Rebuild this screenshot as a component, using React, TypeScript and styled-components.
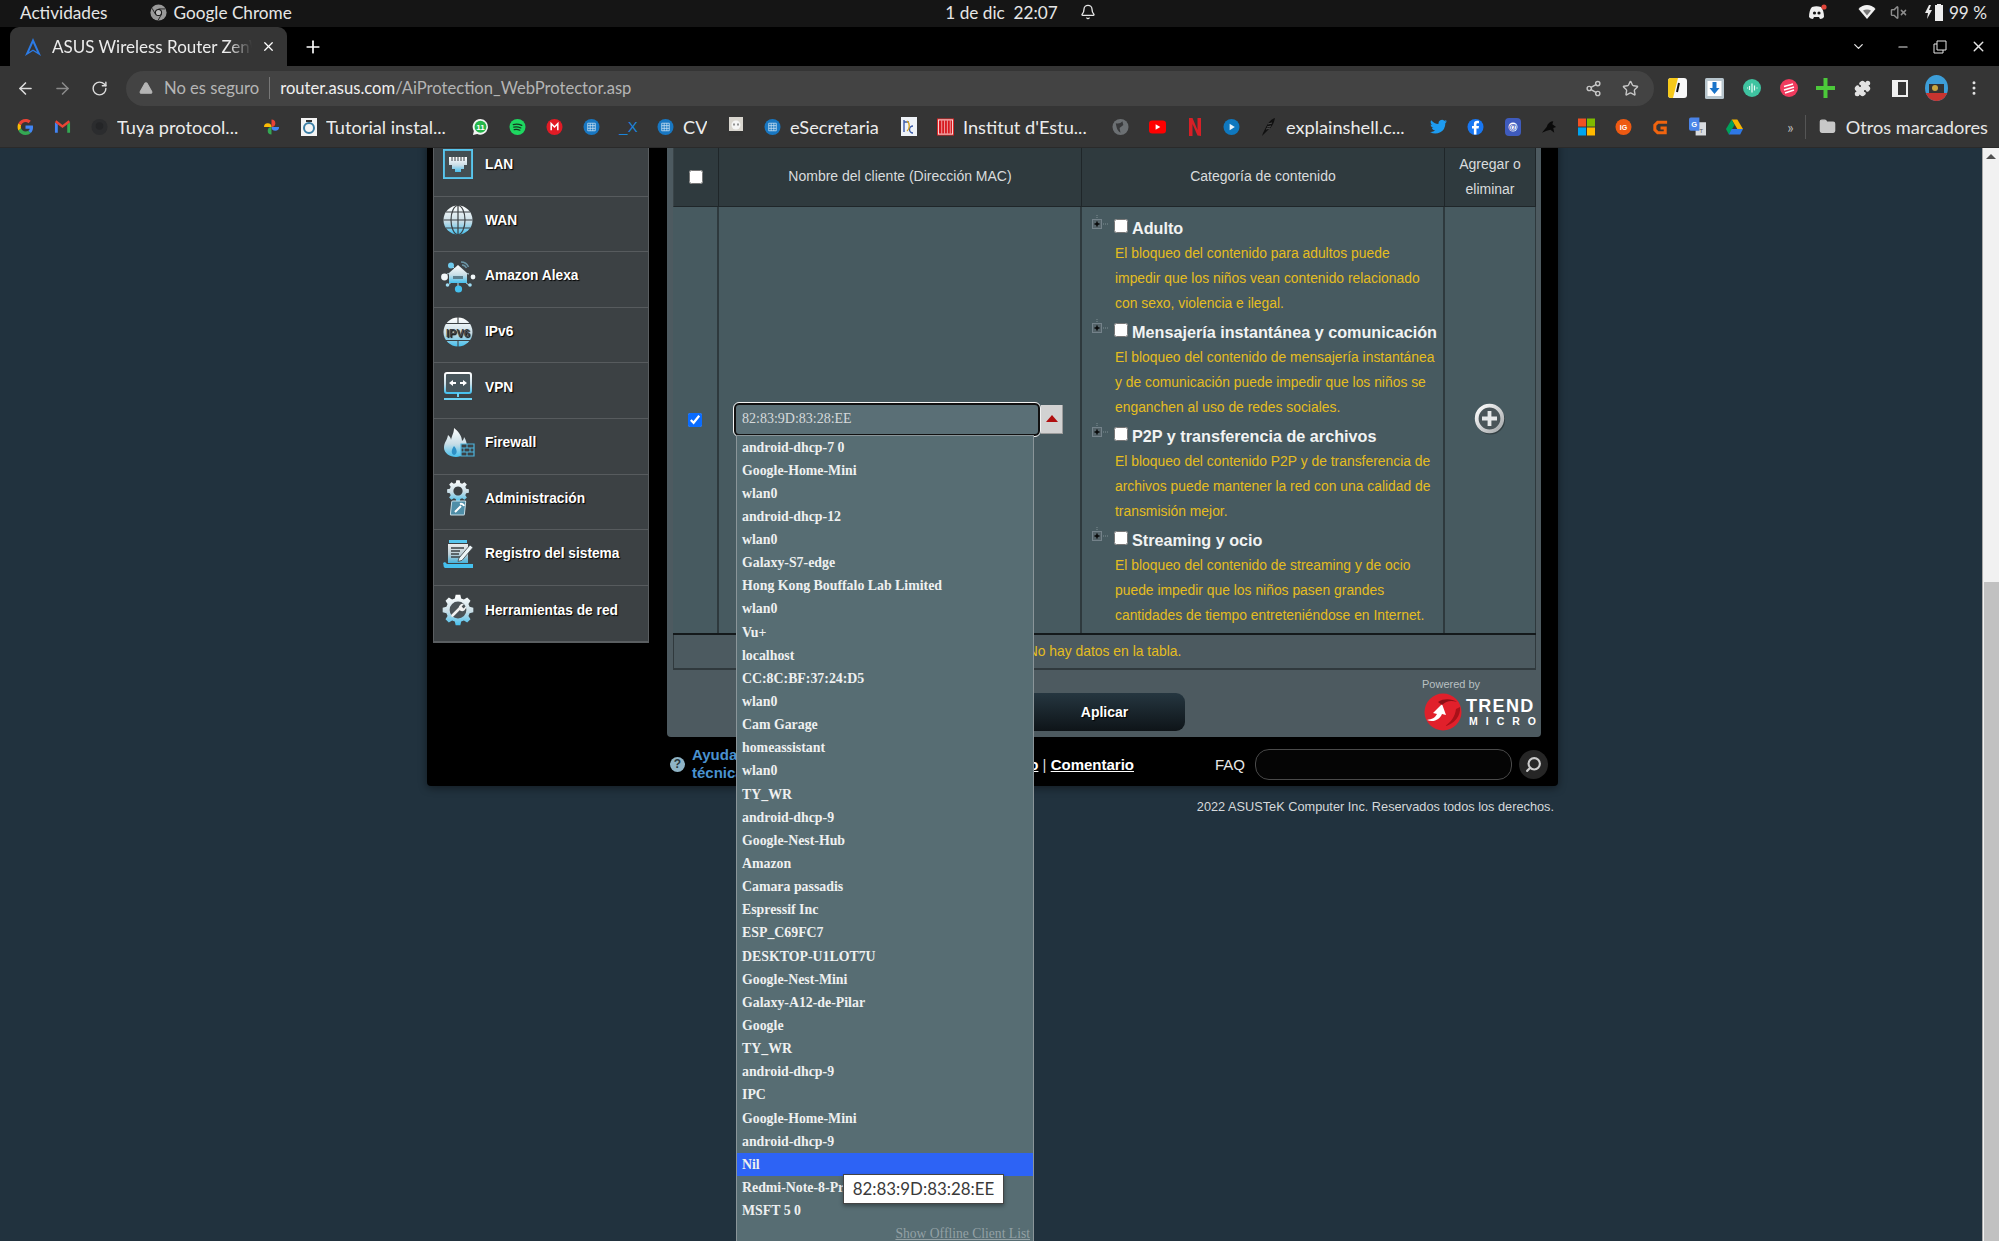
import React, { useId } from "react";
import styled, { createGlobalStyle } from "styled-components";
import {
  ArrowLeft, ArrowRight, RotateCw, TriangleAlert, Star, Share2, Puzzle, Plus, X, ChevronDown, Minus, Search,
  Bell, VolumeX, Folder, EllipsisVertical,
} from "lucide-react";

const Global = createGlobalStyle`
  html, body { margin: 0; padding: 0; width: 1999px; height: 1241px; overflow: hidden; background: #21323e; }
  * { box-sizing: border-box; }
`;

const UI = `"Lato", "Open Sans", sans-serif`;
const ARIAL = `"Liberation Sans", Arial, sans-serif`;
const TIMES = `"Liberation Serif", "Times New Roman", serif`;

const Screen = styled.div`
  width: 1999px; height: 1241px; display: flex; flex-direction: column; overflow: hidden;
  font-family: ${UI};
`;

/* ---------- system bar ---------- */
const SystemBar = styled.div`
  height: 27px; background: #151515; color: #e6e6e6; font-size: 17.2px;
  display: grid; grid-template-columns: 1fr auto 1fr; align-items: center; padding: 0 12px 3px 20px;
`;
const SysLeft = styled.div`display: flex; align-items: center;`;
const SysApp = styled.div`display: flex; align-items: center; gap: 7px; margin-left: 42px;`;
const SysCenter = styled.div`display: flex; align-items: center; gap: 22px; margin-left: 34px;`;
const SysRight = styled.div`display: flex; align-items: center; justify-content: flex-end;`;
const SysIcon = styled.span<{ $mr: number }>`display: flex; margin-right: ${(p) => p.$mr}px;`;

/* ---------- tab strip ---------- */
const TabStrip = styled.div`
  height: 39px; background: #000; display: flex; align-items: stretch; padding-left: 10px; color: #fff;
`;
const Tab = styled.div`
  width: 277px; background: #353535; border-radius: 9px 9px 0 0; display: flex; align-items: center;
  padding: 0 11px 0 13px; gap: 9px; font-size: 17px;
`;
const TabTitle = styled.span`
  flex: 1; overflow: hidden; white-space: nowrap; color: #ececec;
  -webkit-mask-image: linear-gradient(90deg, #000 88%, transparent);
  mask-image: linear-gradient(90deg, #000 88%, transparent);
`;
const NewTab = styled.div`display: flex; align-items: center; margin-left: 16px;`;
const WindowControls = styled.div`
  margin-left: auto; display: flex; align-items: center; color: #e6e6e6;
`;
const WindowBtn = styled.span<{ $w: number }>`
  width: ${(p) => p.$w}px; display: flex; justify-content: center;
`;

/* ---------- toolbar ---------- */
const Toolbar = styled.div`
  height: 44px; background: #353535; display: flex; align-items: center; padding: 0 7px 0 7px;
`;
const NavBtn = styled.span<{ $dim?: boolean }>`
  width: 37px; display: flex; justify-content: center; color: ${(p) => (p.$dim ? "#8a8a8a" : "#dcdcdc")};
`;
const Omnibox = styled.div`
  width: 1528px; height: 35px; margin-left: 8px; background: #434343; border-radius: 18px; display: flex; align-items: center;
  padding: 0 15px 0 13px; font-size: 16.6px; color: #b5b5b5;
`;
const Security = styled.span`display: flex; align-items: center; gap: 11px; padding-right: 10px; border-right: 1px solid #777; height: 22px;`;
const Url = styled.span`margin-left: 10px; color: #b5b5b5; b { font-weight: 400; color: #f0f0f0; }`;
const OmniActions = styled.span`margin-left: auto; display: flex; gap: 20px; color: #c6c6c6;`;
const Extensions = styled.div`display: flex; margin-left: 5px;`;
const ExtBtn = styled.span`width: 37px; height: 26px; display: flex; justify-content: center; align-items: center; color: #e2e2e2;`;

/* ---------- bookmarks ---------- */
const Bookmarks = styled.div`
  height: 38px; background: #353535; display: flex; align-items: center; padding: 0 0 4px 7px;
  border-bottom: 1px solid #2a2a2a; color: #ececec; font-size: 18.2px;
`;
const Bookmark = styled.div`
  display: flex; align-items: center; gap: 9px; padding: 0 10px; flex: none;
`;
const BmGlyph = styled.span`width: 17px; height: 18px; display: flex; align-items: center; justify-content: center; flex: none;`;
const BmLabel = styled.span<{ $w: number }>`width: ${(p) => p.$w}px; white-space: nowrap; overflow: hidden;`;
const BmTextIcon = styled.span`color: #1c84d8; font-family: ${ARIAL}; font-size: 15px; white-space: nowrap;`;
const BmRight = styled.div`
  margin-left: auto; display: flex; align-items: center; padding-right: 11px;
`;
const Chevrons = styled.span`color: #bbb; font-size: 15px; padding-right: 11px; border-right: 1px solid #555; height: 24px; display: flex; align-items: center;`;
const OtherMarks = styled.span`display: flex; align-items: center; gap: 10px; margin-left: 13px; color: #e6e6e6; svg { color: #c8c8c8; }`;

/* ---------- page ---------- */
const Browser = styled.div`flex: 1; min-height: 0; display: flex;`;
const Viewport = styled.div`
  flex: 1; min-width: 0; background: #21323e; overflow: hidden;
`;
const Scrollbar = styled.div`
  width: 17px; background: #f1f1f1; border-left: 1px solid #a9a9a9; display: flex; flex-direction: column; align-items: center;
`;
const ScrollUp = styled.div`
  width: 0; height: 0; margin-top: 6px; border-left: 5px solid transparent; border-right: 5px solid transparent;
  border-bottom: 5px solid #505050;
`;
const ScrollThumb = styled.div`width: 15px; flex: 1; margin-top: 423px; background: #c1c1c1;`;

const Frame = styled.div`
  width: 1131px; margin: -8px 0 0 427px; background: #000; border-radius: 0 0 4px 4px;
  box-shadow: 0 2px 8px rgba(0,0,0,.45);
`;
const FrameBody = styled.div`display: flex; padding: 1px 0 0 6px; align-items: flex-start;`;
const Sidebar = styled.nav`
  width: 216px; background: #3c4144; border: solid #5a5e61; border-width: 0 1px 2px 1px;
`;
const MenuRow = styled.div`
  height: 55.6px; display: flex; align-items: center; gap: 9px; padding: 0 0 7px 6px;
  border-bottom: 1.5px solid #575b5e;
  color: #fff; font: bold 13.75px ${ARIAL}; text-shadow: 1px 1px 1px #000;
  &:last-child { border-bottom: 0; }
`;
const MenuGlyph = styled.span`width: 36px; height: 36px; display: flex; align-items: center; justify-content: center; flex: none;`;

const Panel = styled.section`
  width: 874px; height: 596px; margin-left: 18px; margin-top: 0; padding: 6px 5px 0 6px;
  background: #4d5a60; border-radius: 0 0 4px 4px; display: flex; flex-direction: column;
`;
const Table = styled.div`
  display: grid; grid-template-columns: 46px 363px 363px 91px; grid-template-rows: 60px 426px 2px 35px;
  font-family: ${ARIAL};
`;
const HeadCell = styled.div`
  background: #2f3a3e; color: #d9dcdd; font-size: 14px; line-height: 25px; text-align: center;
  display: flex; align-items: center; justify-content: center;
  border-right: 1px solid #1f2629; border-bottom: 1px solid #1f2629;
  &:first-child { border-left: 1px solid #3a4448; }
  &:last-child { border-right: 1px solid #5a6468; }
`;
const BodyCell = styled.div<{ $left?: boolean }>`
  position: relative; background: #475a60; display: flex; align-items: center; justify-content: center;
  border-right: 2px solid #2e393d;
`;
const ClientCell = styled(BodyCell)`justify-content: flex-start; padding-left: 15px; z-index: 3;`;
const Rule = styled.div`grid-column: 1 / -1; background: #14191b;`;
const EmptyRow = styled.div`
  grid-column: 1 / -1; background: #4c5a60; border: solid #30393d; border-width: 0 1px 2px 1px;
  color: #e5bd1f; font-size: 13.9px; display: flex; align-items: center; justify-content: center; padding-bottom: 1px;
`;
const Check = styled.input`
  width: 14px; height: 14px; margin: 0; flex: none; accent-color: #0a6cff;
`;

const CatCell = styled(BodyCell)`
  flex-direction: column; align-items: stretch; justify-content: flex-start; padding: 7px 0 0 15px;
`;
const Category = styled.div`position: relative; height: 104px; padding-left: 18px;`;
const Expander = styled.span`position: absolute; left: -7px; top: 1px; display: flex;`;
const CatHead = styled.label`
  display: flex; align-items: flex-start; gap: 4px; height: 27px; margin-left: -1px;
  color: #f1f3f3; font: bold 16.2px/29px ${ARIAL}; white-space: nowrap;
  input { margin-top: 5px; }
`;
const CatText = styled.p`
  margin: 0; width: 320px; color: #e5bd1f; font-size: 13.88px; line-height: 25px; white-space: nowrap;
`;

const AddCell = styled(BodyCell)`border-right: 1px solid #2e393d; padding: 0 1px 2px 0;`;

/* combo */
const Combo = styled.div`display: flex; align-items: center; width: 330px; position: relative; margin-bottom: 2px;`;
const ComboInput = styled.div`
  width: 306px; height: 33px; background: #5a6f76; border: 2px solid #111; border-radius: 5px;
  outline: 1.5px solid #f2f2f2; color: #d6dadb; font: 14px/28px ${TIMES}; padding-left: 6px;
`;
const ComboArrow = styled.div`
  width: 22px; height: 29px; margin-left: 1px; background: #d2d2d2; display: flex; align-items: center; justify-content: center;
  border-right: 1px solid #9b9b9b; border-bottom: 1px solid #9b9b9b;
  i { width: 0; height: 0; border-left: 6px solid transparent; border-right: 6px solid transparent; border-bottom: 7px solid #b00f10; }
`;
const ClientList = styled.ul`
  position: absolute; left: 2px; top: 32px; width: 298px; margin: 0; padding: 0; list-style: none;
  background: #576d73; border: solid #8a9599; border-width: 1px 1px 0 1px;
  font: bold 13.85px ${TIMES}; color: #eef0f0; z-index: 5;
`;
const ClientItem = styled.li<{ $active?: boolean }>`
  height: 23.15px; line-height: 23.15px; padding-left: 5px; white-space: nowrap;
  background: ${(p) => (p.$active ? "#2d63f5" : "transparent")};
`;
const OfflineLink = styled.li`
  height: 23.15px; line-height: 23.15px; text-align: right; padding-right: 3px;
  color: #93a1a5; font: 13.6px/23.15px ${TIMES}; text-decoration: underline;
`;
const Tooltip = styled.div`
  position: absolute; left: 106px; top: 738px; width: 161px; height: 30px; background: #fff; color: #3a3a3a;
  border: 1px solid #444; font: 16.9px/27px ${UI}; text-align: center; box-shadow: 0 2px 4px rgba(0,0,0,.35); z-index: 6;
`;

/* actions */
const ActionRow = styled.div`
  height: 68px; display: grid; grid-template-columns: 1fr 160px 1fr; align-items: end; padding-bottom: 6px; font-family: ${ARIAL};
`;
const Apply = styled.button`
  grid-column: 2; height: 38px; border: 0; border-radius: 9px; color: #fff; font: bold 14px ${ARIAL};
  background: linear-gradient(180deg, #253640 0%, #0e1418 100%); text-shadow: 1px 1px 1px #000; padding: 0;
`;
const Powered = styled.div`justify-self: end; width: 114px; display: flex; flex-direction: column; align-items: flex-start;`;
const PoweredBy = styled.span`color: #b9c0c2; font-size: 11px; margin-bottom: 3px;`;
const TrendRow = styled.div`display: flex; align-items: center; gap: 4px; padding-left: 2px;`;
const TrendText = styled.div`display: flex; flex-direction: column; color: #fff; font-weight: bold; line-height: 1;`;
const TrendTop = styled.span`font-size: 18px; letter-spacing: 1.3px;`;
const TrendBottom = styled.span`font-size: 10.5px; letter-spacing: 8px; margin-top: 1px; margin-left: 3px; white-space: nowrap;`;

/* footer */
const Footer = styled.footer`
  height: 49px; display: flex; align-items: center; padding: 5px 0 0 243px; font-family: ${ARIAL}; color: #fff;
`;
const HelpBadge = styled.span`
  width: 15px; height: 15px; border-radius: 50%; background: #8fb4c6; color: #26363d; font: bold 12px/15px ${ARIAL}; text-align: center; flex: none;
`;
const HelpLabel = styled.span`margin-left: 7px; color: #4a92cf; font: bold 15px/18px ${ARIAL}; width: 90px; flex: none;`;
const FooterLinks = styled.span`
  width: 352px; flex: none; text-align: right; font-size: 15px; color: #ddd; white-space: nowrap;
  a { color: #fff; font-weight: bold; text-decoration: underline; }
`;
const Faq = styled.span`margin-left: 81px; width: 30px; flex: none; font-size: 15px; color: #e8e8e8;`;
const FaqInput = styled.div`
  width: 257px; height: 31px; flex: none; margin-left: 10px; border: 1px solid #4a4a4a; border-radius: 14px; background: #050505;
`;
const FaqSearch = styled.span`
  width: 29px; height: 29px; flex: none; margin-left: 7px; border-radius: 50%; background: #262626; display: flex; align-items: center; justify-content: center; color: #ccc;
  svg { transform: scaleX(-1); }
`;
const Copyright = styled.div`
  width: 1131px; margin-left: 427px; padding: 13px 4px 0 0; text-align: right; color: #d5d9db; font: 12.75px ${ARIAL};
`;

/* ---------- drawings ---------- */
const gearPath = (cx: number, cy: number, ro: number, ri: number, teeth: number) => {
  const pts: string[] = [];
  for (let i = 0; i < teeth; i++) {
    const a = (i / teeth) * Math.PI * 2;
    const w = (Math.PI / teeth) * 0.55;
    const coords = [[a - w * 1.25, ri], [a - w * 0.7, ro], [a + w * 0.7, ro], [a + w * 1.25, ri]];
    coords.forEach(([t, r]) => pts.push(`${(cx + r * Math.cos(t)).toFixed(2)} ${(cy + r * Math.sin(t)).toFixed(2)}`));
  }
  return `M${pts.join("L")}Z`;
};

const MenuSvg: React.FC<{ children: (g: string) => React.ReactNode }> = ({ children }) => {
  const id = useId().replace(/[^a-z0-9]/gi, "");
  return (
    <svg width="36" height="36" viewBox="0 0 36 36">
      <defs>
        <linearGradient id={id} x1="0" y1="0" x2="0" y2="1">
          <stop offset="0" stopColor="#ffffff" />
          <stop offset="0.55" stopColor="#c8dde6" />
          <stop offset="1" stopColor="#45c0ee" />
        </linearGradient>
      </defs>
      {children(`url(#${id})`)}
    </svg>
  );
};
const BG = "#3c4144";

const LanIcon = () => (
  <MenuSvg>{(g) => <>
    <rect x="4" y="3" width="28" height="28" fill="none" stroke="#58c6ee" strokeWidth="2" />
    <rect x="4.8" y="3.8" width="26.4" height="26.4" fill="#48565c" opacity=".6" />
    <path d="M9 10h18v8h-3v4h-3v3h-6v-3h-3v-4H9z" fill={g} />
    <path d="M12 10v4M15 10v4M18 10v4M21 10v4M24 10v4" stroke={BG} strokeWidth="1" />
  </>}</MenuSvg>
);
const GlobeLines = () => <>
  <ellipse cx="18" cy="18" rx="7" ry="14.5" fill="none" stroke={BG} strokeWidth="1.2" />
  <path d="M18 3v30M3.5 18h29M6 10h24M6 26h24" stroke={BG} strokeWidth="1.2" />
</>;
const WanIcon = () => (
  <MenuSvg>{(g) => <><circle cx="18" cy="18" r="14.5" fill={g} /><GlobeLines /></>}</MenuSvg>
);
const AlexaIcon = () => (
  <MenuSvg>{(g) => <>
    <path d="M7 16L18 14M29 16L18 14M8 27L14 22M29 27L22 22M18 24v6M11 7l5 5" stroke="#bcd6e0" strokeWidth="1" />
    <path d="M18 7l9 8v10H9V15z" fill={g} />
    <rect x="13" y="18" width="10" height="3" fill="#5d7f8e" />
    <circle cx="4.5" cy="19" r="3.4" fill="#f2f7f9" /><circle cx="33" cy="19" r="2.4" fill="#f2f7f9" />
    <circle cx="11" cy="7.5" r="3" fill="#6fcbee" /><circle cx="18.5" cy="31" r="3.6" fill="#45c0ee" />
    <circle cx="7.5" cy="27" r="1.8" fill="#9fdcf3" /><circle cx="30" cy="27" r="1.8" fill="#9fdcf3" />
    <path d="M21 4c3 0 6 1.5 7.5 5M22 7c2 0 3.5 1 4.5 3" fill="none" stroke="#6b94a5" strokeWidth="1.5" />
  </>}</MenuSvg>
);
const Ipv6Icon = () => (
  <MenuSvg>{(g) => <>
    <circle cx="18" cy="18" r="14.5" fill={g} />
    <path d="M18 3v7M18 26v7M6 9.5h24M6 26.5h24" stroke={BG} strokeWidth="1.1" />
    <text x="18" y="22.5" textAnchor="middle" fontFamily={ARIAL} fontSize="11" fontWeight="bold" fill={BG}>IPV6</text>
  </>}</MenuSvg>
);
const VpnIcon = () => (
  <MenuSvg>{(g) => <>
    <rect x="5" y="4" width="26" height="20" rx="2" fill="#48565c" stroke={g} strokeWidth="2" />
    <path d="M9 14l4-3v2h3v2h-3v2zM27 14l-4-3v2h-3v2h3v2z" fill="#fff" />
    <path d="M17 24h2v4h-2zM4 29h28v2H4z" fill="#6cd0f2" />
  </>}</MenuSvg>
);
const FireIcon = () => (
  <MenuSvg>{(g) => <>
    <path d="M4 23c0-6 3-7 4-13 2 2 3 3 3 5 1-5 3-7 3-12 4 3 8 8 8 13 1-1 2-2 2-4 2 3 3 6 3 11 0 5-5 9-11 9S4 28 4 23z" fill={g} />
    <path d="M14 30c-3-1-3-5 0-9 3 3 4 8 0 9z" fill="#2e90c6" />
    <path d="M21 19h13v12H21z" fill="#3c4144" stroke="#4db4dc" strokeWidth="1.2" />
    <path d="M21 23h13M21 27h13M27 19v4M24 23v4M30 23v4M27 27v4" stroke="#4db4dc" strokeWidth="1" />
  </>}</MenuSvg>
);
const AdminIcon = () => (
  <MenuSvg>{(g) => <>
    <path fillRule="evenodd" d={`${gearPath(18, 11, 11, 8.4, 8)}M18 6.4a4.6 4.6 0 1 0 .01 0z`} fill={g} />
    <rect x="11" y="21" width="14" height="14" rx="1" transform="skewX(-6) translate(3 0)" fill="#4f8ea8" stroke="#c8dde6" />
    <path d="M15 32l6-6m-1-2a3 3 0 0 1 4 2" stroke="#fff" strokeWidth="2" fill="none" />
  </>}</MenuSvg>
);
const LogIcon = () => (
  <MenuSvg>{(g) => <>
    <path d="M9 4h18v3H9z" fill="#58c6ee" />
    <rect x="8" y="8" width="20" height="19" fill={g} opacity=".9" />
    <path d="M11 12h13M11 15h9M11 18h8M11 21h10" stroke={BG} strokeWidth="1.4" />
    <path d="M19 22l11-13 3 2.4-11 13-4 1z" fill="#eef6f9" stroke={BG} strokeWidth=".8" />
    <path d="M3 27c1 2 0 4 2 5h28v-4H7l-2-2z" fill="#45c0ee" />
  </>}</MenuSvg>
);
const ToolsIcon = () => (
  <MenuSvg>{(g) => <>
    <path d={gearPath(18, 18, 15.5, 12, 8)} fill={g} />
    <circle cx="18" cy="18" r="8.4" fill="#4a5257" />
    <path d="M12.5 23.5l7.5-7.5" stroke="#f2f2f2" strokeWidth="2.6" strokeLinecap="round" />
    <path d="M19 17a4 4 0 0 1 5-5l-2.4 2.4 2 2L26 14a4 4 0 0 1-6 4.5z" fill="#f2f2f2" />
  </>}</MenuSvg>
);

const TrendLogo = () => (
  <svg width="38" height="38" viewBox="0 0 38 38">
    <circle cx="19" cy="19" r="18.5" fill="#e1202b" />
    <path d="M3 27c5-1 8-2 10-6l-4-1 9-9 4 11-4-1c-2 5-8 9-15 6z" fill="#fff" />
    <path d="M14 9c6-4 14-3 19 0-6-2-11-1-15 3z" fill="#8c0f16" />
    <path d="M36 14c1 8-5 17-15 19 6-4 10-9 11-17z" fill="#a81119" />
  </svg>
);
const AddIcon = () => (
  <svg width="32" height="32" viewBox="0 0 32 32">
    <defs>
      <linearGradient id="addRing" x1="0" y1="0" x2="1" y2="1">
        <stop offset="0" stopColor="#ffffff" /><stop offset="1" stopColor="#a4a8aa" />
      </linearGradient>
    </defs>
    <circle cx="16.5" cy="17" r="14.5" fill="#2a3336" opacity=".7" />
    <circle cx="15.5" cy="15.5" r="12.8" fill="#4a5559" stroke="url(#addRing)" strokeWidth="3.8" />
    <path d="M15.5 8v15M8 15.500h15" stroke="#e6e8e9" strokeWidth="3.8" />
  </svg>
);
const ExpanderIcon = () => (
  <svg width="20" height="20" viewBox="0 0 20 20">
    <path d="M7 0v4M13 9h6" stroke="#7f8d92" strokeDasharray="1 1" />
    <rect x="2.5" y="4.5" width="9" height="9" fill="#55646a" stroke="#74828a" />
    <path d="M4.5 9h5M7 6.5v5" stroke="#050505" strokeWidth="1.4" />
  </svg>
);

/* top chrome */
const ChromeLogo = ({ s = 17 }: { s?: number }) => (
  <svg width={s} height={s} viewBox="0 0 20 20">
    <circle cx="10" cy="10" r="9.5" fill="#9a9a9a" />
    <circle cx="10" cy="10" r="4.2" fill="#151515" /><circle cx="10" cy="10" r="3" fill="#bdbdbd" />
    <path d="M10 5.8h8M6.4 12l-4-7M13.6 12l-4 7" stroke="#151515" strokeWidth="1" />
  </svg>
);
const DiscordIcon = () => (
  <svg width="19" height="17" viewBox="0 0 19 17">
    <path d="M4 3c3-1 6-1 9 0 2 2 3 6 3 10-1 1-2 2-4 2l-1-2H6l-1 2c-2 0-3-1-4-2 0-4 1-8 3-10z" fill="#eee" />
    <circle cx="6.5" cy="9" r="1.6" fill="#151515" /><circle cx="11" cy="9" r="1.6" fill="#151515" />
    <circle cx="16" cy="3" r="2.6" fill="#e0453a" />
  </svg>
);
const WifiIcon = () => (
  <svg width="18" height="16" viewBox="0 0 18 16">
    <path d="M9 15L.5 5C5-.5 13-.5 17.5 5z" fill="#f0f0f0" />
    <path d="M9 11.5L5 6.5c2.4-1.4 5.6-1.4 8 0z" fill="#151515" opacity=".55" />
  </svg>
);
const BatteryIcon = () => (
  <svg width="22" height="19" viewBox="0 0 22 19">
    <path d="M5 2L1 10h3l-1 6 5-9H5l2-5z" fill="#e8e8e8" />
    <path d="M13 1h4v1h2v16h-8V2h2z" fill="#eee" />
  </svg>
);
const AsusFavicon = () => (
  <svg width="20" height="20" viewBox="0 0 20 20">
    <path d="M10 1L2 19l8-5 8 5z M10 6l4 9-4-2.6L6 15z" fill="#2c7be5" fillRule="evenodd" />
  </svg>
);
const Dot = ({ c, r = 8.5, children }: { c: string; r?: number; children?: React.ReactNode }) => (
  <svg width="18" height="18" viewBox="0 0 18 18">
    <circle cx="9" cy="9" r={r} fill={c} />
    {children}
  </svg>
);
const Upc = () => (
  <Dot c="#1877c2">
    <path d="M5 5h8v8H5zM5 7.6h8M5 10.4h8M7.6 5v8M10.4 5v8" fill="none" stroke="#cfe4f5" strokeWidth=".8" />
  </Dot>
);
const GoogleG = () => (
  <svg width="18" height="18" viewBox="0 0 18 18">
    <path d="M17 9.2c0-.6-.1-1.2-.2-1.7H9v3.3h4.5c-.2 1-.8 1.9-1.7 2.5l2.7 2.1c1.6-1.5 2.5-3.6 2.5-6.2z" fill="#4285f4" />
    <path d="M9 17.5c2.3 0 4.2-.8 5.5-2.1L11.8 13c-.7.5-1.7.8-2.8.8-2.2 0-4-1.5-4.7-3.5L1.5 12.6C2.9 15.5 5.7 17.5 9 17.5z" fill="#34a853" />
    <path d="M4.3 10.3c-.4-1-.4-2.1 0-3.1L1.5 5C.3 7.3.3 10.2 1.5 12.6z" fill="#fbbc05" />
    <path d="M9 3.7c1.2 0 2.3.4 3.2 1.2l2.4-2.4C13.2 1.200 11.2.5 9 .5 5.700.5 2.900 2.500 1.500 5l2.800 2.200C5 5.200 6.800 3.700 9 3.700z" fill="#ea4335" />
  </svg>
);
const Gmail = () => (
  <svg width="18" height="15" viewBox="0 0 18 15">
    <path d="M1 14V3l3 2v9z" fill="#4285f4" /><path d="M14 14V5l3-2v11z" fill="#34a853" />
    <path d="M1 3l8 6 8-6-1.500-2L9 6 2.500 1z" fill="#ea4335" />
  </svg>
);
const Pinwheel = () => (
  <svg width="18" height="18" viewBox="0 0 18 18">
    <path d="M9 9V1a4 4 0 0 1 0 8z" fill="#ea4335" /><path d="M9 9h8a4 4 0 0 1-8 0z" fill="#4285f4" />
    <path d="M9 9v8a4 4 0 0 1 0-8z" fill="#34a853" /><path d="M9 9H1a4 4 0 0 1 8 0z" fill="#fbbc05" />
  </svg>
);
const Tutorial = () => (
  <svg width="16" height="18" viewBox="0 0 16 18">
    <rect width="16" height="18" fill="#f4f4f4" /><circle cx="8" cy="10" r="5" fill="none" stroke="#3a7ea5" strokeWidth="2" />
    <path d="M5 2h6v2H5z" fill="#333" />
  </svg>
);
const Whatsapp = () => (
  <svg width="18" height="18" viewBox="0 0 18 18">
    <path d="M9 .5a8.300 8.300 0 0 0-7 12.700L1 17.500l4.500-1A8.300 8.300 0 1 0 9 .5z" fill="#f4f4f4" />
    <circle cx="9" cy="8.800" r="6.300" fill="#25b64a" />
    <text x="9" y="12" textAnchor="middle" fontSize="8.500" fill="#fff" fontFamily={ARIAL} fontWeight="bold">11</text>
  </svg>
);
const Spotify = () => (
  <Dot c="#1ed760">
    <path d="M4.500 6.500c3-.8 6-.6 9 .8M5 9.200c2.500-.6 5-.4 7.500.8M5.500 11.700c2-.4 4-.3 6 .7" stroke="#14361f" strokeWidth="1.300" fill="none" strokeLinecap="round" />
  </Dot>
);
const Mega = () => (
  <Dot c="#e11b25"><path d="M5.500 12.500v-7L9 9l3.500-3.500v7" stroke="#fff" strokeWidth="1.600" fill="none" /></Dot>
);
const Socket = () => (
  <svg width="14" height="19" viewBox="0 0 14 19">
    <rect width="14" height="19" fill="#d9d6cf" /><circle cx="7" cy="8" r="4.500" fill="#f5f5f5" />
    <path d="M5 6.500v2M9 6.500v2" stroke="#333" /><path d="M0 14h14v5H0z" fill="#333" />
  </svg>
);
const Dc = () => (
  <svg width="16" height="19" viewBox="0 0 16 19">
    <rect width="16" height="19" fill="#eef2f7" />
    <path d="M3 3v12M8 5l-5 0M12 9a3.500 3.500 0 1 0 0 7" stroke="#3a5aa8" strokeWidth="1.400" fill="none" />
    <path d="M6 4c3 2 3 8 0 10" stroke="#d9a21b" strokeWidth="1.300" fill="none" />
  </svg>
);
const Red = () => (
  <svg width="18" height="18" viewBox="0 0 18 18">
    <rect x=".5" y=".5" width="17" height="17" fill="#f8e9e9" stroke="#d22" />
    <path d="M2 2h14v14H2z" fill="#d71920" /><path d="M5 2v14M8 2v14M11 2v14M14 2v14" stroke="#f6c6c6" strokeWidth=".8" />
  </svg>
);
const YouTube = () => (
  <svg width="18" height="14" viewBox="0 0 18 14">
    <rect width="18" height="14" rx="3.500" fill="#f00" /><path d="M7 4l5 3-5 3z" fill="#fff" />
  </svg>
);
const Netflix = () => (
  <svg width="12" height="18" viewBox="0 0 12 18">
    <path d="M0 0h3.500l5 12V0H12v18l-3.500-.5L3.500 6v12L0 18z" fill="#d81f26" />
  </svg>
);
const Play = () => (
  <Dot c="#0f78bf"><path d="M7 5.500l5.500 3.500L7 12.500z" fill="#e8f4fb" /></Dot>
);
const Quill = () => (
  <svg width="16" height="18" viewBox="0 0 16 18">
    <path d="M14 0c-1 5-3 9-6 11L3 16l-2 2 1-3 3-6c2-4 5-8 9-9z" fill="#111" />
    <path d="M6 9l4-1M5 11l4-1M7 6l4-1" stroke="#666" strokeWidth=".7" />
  </svg>
);
const Twitter = () => (
  <svg width="18" height="15" viewBox="0 0 18 15">
    <path d="M18 2c-.7.300-1.400.500-2.100.600.800-.500 1.300-1.200 1.600-2-.7.400-1.500.700-2.300.900A3.700 3.700 0 0 0 9 4.800 10.500 10.500 0 0 1 1.300.900 3.700 3.700 0 0 0 2.400 5.800c-.6 0-1.200-.2-1.700-.5 0 1.800 1.300 3.300 3 3.700-.5.100-1.100.200-1.700.100.500 1.500 1.900 2.500 3.500 2.600A7.400 7.400 0 0 1 0 13.200 10.500 10.500 0 0 0 16.200 4c.7-.5 1.300-1.200 1.800-2z" fill="#1d9bf0" />
  </svg>
);
const Facebook = () => (
  <Dot c="#1877f2"><path d="M10 17v-6.500h2.300l.4-2.600H10V6.300c0-.8.300-1.300 1.400-1.300h1.300V2.700c-.6-.1-1.300-.2-2-.2-2 0-3.400 1.200-3.400 3.400v2H5.300v2.600h2v6.500z" fill="#fff" /></Dot>
);
const AtIcon = () => (
  <svg width="16" height="18" viewBox="0 0 16 18">
    <rect width="16" height="18" rx="4" fill="#3f5bbd" /><circle cx="8" cy="9" r="4.500" fill="#fff" />
    <text x="8" y="12" fontSize="9" textAnchor="middle" fill="#3f5bbd" fontFamily={ARIAL} fontWeight="bold">@</text>
  </svg>
);
const Bird = () => (
  <svg width="18" height="14" viewBox="0 0 18 14">
    <path d="M1 13l5-6c1-4 4-6 7-6l-1 3 4 3-3 1 1 5-4-3-4 1z" fill="#0a0a0a" />
  </svg>
);
const Windows = () => (
  <svg width="18" height="18" viewBox="0 0 18 18">
    <path d="M0 0h8.500v8.500H0z" fill="#f25022" /><path d="M9.500 0H18v8.500H9.500z" fill="#7fba00" />
    <path d="M0 9.500h8.500V18H0z" fill="#00a4ef" /><path d="M9.500 9.500H18V18H9.500z" fill="#ffb900" />
  </svg>
);
const IgBadge = () => (
  <Dot c="#ee5a12"><text x="9" y="12" fontSize="7.500" textAnchor="middle" fill="#fff" fontFamily={ARIAL} fontWeight="bold">IG</text></Dot>
);
const OrangeG = () => (
  <svg width="18" height="18" viewBox="0 0 18 18">
    <path d="M16 4H6L3 7v5l3 3h8v-5H9" fill="none" stroke="#f0640f" strokeWidth="3.200" />
  </svg>
);
const Translate = () => (
  <svg width="18" height="19" viewBox="0 0 18 19">
    <rect x="7" y="5" width="11" height="14" fill="#d9dce0" />
    <path d="M0 2a2 2 0 0 1 2-2h9v14H2a2 2 0 0 1-2-2z" fill="#4a83e8" />
    <text x="5.500" y="10" fontSize="8" textAnchor="middle" fill="#fff" fontFamily={ARIAL} fontWeight="bold">G</text>
    <text x="13" y="16" fontSize="6" textAnchor="middle" fill="#555" fontFamily={ARIAL}>T</text>
  </svg>
);
const Drive = () => (
  <svg width="18" height="16" viewBox="0 0 18 16">
    <path d="M6 0h6l6 10h-6z" fill="#f7b500" /><path d="M6 0L0 10l3 6 6-10z" fill="#00a25a" />
    <path d="M6 10h12l-3 6H3z" fill="#2e78e6" />
  </svg>
);
const GitDark = () => <Dot c="#2b2c2e"><circle cx="9" cy="8" r="4" fill="#242527" /></Dot>;
const GrayGlobe = () => (
  <Dot c="#6c7073"><path d="M4 5c3 1 5 0 7-2l1 4-4 3 1 5c-3-2-4-4-5-10z" fill="#38393b" /></Dot>
);

const ExtClock = () => (
  <svg width="19" height="20" viewBox="0 0 19 20">
    <rect width="19" height="20" rx="3" fill="#f8f8f8" /><path d="M0 3a3 3 0 0 1 3-3h7L5 20H3a3 3 0 0 1-3-3z" fill="#f7c919" />
    <path d="M11 5L9 14" stroke="#111" strokeWidth="2" />
  </svg>
);
const ExtDown = () => (
  <svg width="19" height="21" viewBox="0 0 19 21">
    <rect width="19" height="21" rx="1.500" fill="#b7c5cd" /><rect x="2.500" y="3" width="14" height="15" fill="#fff" />
    <path d="M7.500 4h4v6h3l-5 6-5-6h3z" fill="#1a74c9" />
  </svg>
);
const ExtWave = () => (
  <Dot c="#3fc3a0" r="9"><path d="M4 9h1M6.500 7v4M9 4.500v9M11.500 6.500v5M14 8.500v1" stroke="#eafaf5" strokeWidth="1.200" /></Dot>
);
const ExtPocket = () => (
  <Dot c="#ef3a5d" r="9"><path d="M4 7.500l9-2.500M4 11l10-3M5 14l9-3" stroke="#fff" strokeWidth="1.500" /></Dot>
);
const ExtPlus = () => (
  <svg width="19" height="20" viewBox="0 0 19 20"><path d="M7.500 0h4v8H19v4h-7.500v8h-4v-8H0V8h7.500z" fill="#4cc93a" /></svg>
);
const ExtSide = () => (
  <svg width="16" height="17" viewBox="0 0 16 17"><rect x="1" y="1" width="14" height="15" fill="none" stroke="#f0f0f0" strokeWidth="2" /><rect x="1" y="1" width="5" height="15" fill="#f0f0f0" /></svg>
);
const Avatar = () => (
  <svg width="23" height="26" viewBox="0 0 23 26">
    <defs><clipPath id="av"><ellipse cx="11.500" cy="13" rx="11.500" ry="13" /></clipPath></defs>
    <g clipPath="url(#av)">
      <rect width="23" height="26" fill="#3d9ed8" /><rect y="18" width="23" height="8" fill="#c8342f" />
      <rect x="4" y="9" width="15" height="9" fill="#333" /><circle cx="10" cy="13" r="3" fill="#c8a640" />
    </g>
  </svg>
);

const menu: [string, React.ReactNode][] = [
  ["LAN", <LanIcon />], ["WAN", <WanIcon />], ["Amazon Alexa", <AlexaIcon />], ["IPv6", <Ipv6Icon />], ["VPN", <VpnIcon />],
  ["Firewall", <FireIcon />], ["Administración", <AdminIcon />], ["Registro del sistema", <LogIcon />], ["Herramientas de red", <ToolsIcon />],
];

const categories: [string, string[]][] = [
  ["Adulto", ["El bloqueo del contenido para adultos puede", "impedir que los niños vean contenido relacionado", "con sexo, violencia e ilegal."]],
  ["Mensajería instantánea y comunicación", ["El bloqueo del contenido de mensajería instantánea", "y de comunicación puede impedir que los niños se", "enganchen al uso de redes sociales."]],
  ["P2P y transferencia de archivos", ["El bloqueo del contenido P2P y de transferencia de", "archivos puede mantener la red con una calidad de", "transmisión mejor."]],
  ["Streaming y ocio", ["El bloqueo del contenido de streaming y de ocio", "puede impedir que los niños pasen grandes", "cantidades de tiempo entreteniéndose en Internet."]],
];

const clients = [
  "android-dhcp-7 0", "Google-Home-Mini", "wlan0", "android-dhcp-12", "wlan0", "Galaxy-S7-edge", "Hong Kong Bouffalo Lab Limited", "wlan0", "Vu+",
  "localhost", "CC:8C:BF:37:24:D5", "wlan0", "Cam Garage", "homeassistant", "wlan0", "TY_WR", "android-dhcp-9", "Google-Nest-Hub", "Amazon",
  "Camara passadis", "Espressif Inc", "ESP_C69FC7", "DESKTOP-U1LOT7U", "Google-Nest-Mini", "Galaxy-A12-de-Pilar", "Google", "TY_WR", "android-dhcp-9",
  "IPC", "Google-Home-Mini", "android-dhcp-9", "Nil", "Redmi-Note-8-Pro", "MSFT 5 0",
];

const bookmarks: { icon: React.ReactNode; label?: string; w?: number }[] = [
  { icon: <GoogleG /> }, { icon: <Gmail /> },
  { icon: <GitDark />, label: "Tuya protocol...", w: 126 },
  { icon: <Pinwheel /> },
  { icon: <Tutorial />, label: "Tutorial instal...", w: 126 },
  { icon: <Whatsapp /> }, { icon: <Spotify /> }, { icon: <Mega /> }, { icon: <Upc /> },
  { icon: <BmTextIcon>_X</BmTextIcon> },
  { icon: <Upc />, label: "CV", w: 24 },
  { icon: <Socket /> },
  { icon: <Upc />, label: "eSecretaria", w: 90 },
  { icon: <Dc /> },
  { icon: <Red />, label: "Institut d'Estu...", w: 129 },
  { icon: <GrayGlobe /> }, { icon: <YouTube /> }, { icon: <Netflix /> }, { icon: <Play /> },
  { icon: <Quill />, label: "explainshell.c...", w: 124 },
  { icon: <Twitter /> }, { icon: <Facebook /> }, { icon: <AtIcon /> }, { icon: <Bird /> }, { icon: <Windows /> },
  { icon: <IgBadge /> }, { icon: <OrangeG /> }, { icon: <Translate /> }, { icon: <Drive /> },
];

export default function App() {
  return (
    <Screen>
      <Global />
      <SystemBar>
        <SysLeft>
          <span>Actividades</span>
          <SysApp><ChromeLogo /><span>Google Chrome</span></SysApp>
        </SysLeft>
        <SysCenter>
          <span>1 de dic&nbsp;&nbsp;22:07</span>
          <Bell size={16} />
        </SysCenter>
        <SysRight>
          <SysIcon $mr={31}><DiscordIcon /></SysIcon>
          <SysIcon $mr={14}><WifiIcon /></SysIcon>
          <SysIcon $mr={17}><VolumeX size={17} color="#8d8d8d" /></SysIcon>
          <SysIcon $mr={3}><BatteryIcon /></SysIcon>
          <span>99 %</span>
        </SysRight>
      </SystemBar>

      <TabStrip>
        <Tab>
          <AsusFavicon />
          <TabTitle>ASUS Wireless Router ZenWiFi</TabTitle>
          <X size={15} />
        </Tab>
        <NewTab><Plus size={20} /></NewTab>
        <WindowControls>
          <WindowBtn $w={50}><ChevronDown size={15} /></WindowBtn>
          <WindowBtn $w={40}><Minus size={14} /></WindowBtn>
          <WindowBtn $w={34}>
            <svg width="14" height="14" viewBox="0 0 14 14"><path d="M4 1h9v9H4zM4 4H1v9h9v-3" fill="none" stroke="#e6e6e6" /></svg>
          </WindowBtn>
          <WindowBtn $w={42}><X size={17} /></WindowBtn>
        </WindowControls>
      </TabStrip>

      <Toolbar>
        <NavBtn><ArrowLeft size={19} /></NavBtn>
        <NavBtn $dim><ArrowRight size={19} /></NavBtn>
        <NavBtn><RotateCw size={17} /></NavBtn>
        <Omnibox>
          <Security><TriangleAlert size={14} fill="#b5b5b5" color="#b5b5b5" /><span>No es seguro</span></Security>
          <Url><b>router.asus.com</b>/AiProtection_WebProtector.asp</Url>
          <OmniActions><Share2 size={17} /><Star size={17} /></OmniActions>
        </Omnibox>
        <Extensions>
          <ExtBtn><ExtClock /></ExtBtn>
          <ExtBtn><ExtDown /></ExtBtn>
          <ExtBtn><ExtWave /></ExtBtn>
          <ExtBtn><ExtPocket /></ExtBtn>
          <ExtBtn><ExtPlus /></ExtBtn>
          <ExtBtn><Puzzle size={17} fill="#e2e2e2" /></ExtBtn>
          <ExtBtn><ExtSide /></ExtBtn>
          <ExtBtn><Avatar /></ExtBtn>
          <ExtBtn><EllipsisVertical size={18} /></ExtBtn>
        </Extensions>
      </Toolbar>

      <Bookmarks>
        {bookmarks.map((b, i) => (
          <Bookmark key={i}>
            <BmGlyph>{b.icon}</BmGlyph>
            {b.label && <BmLabel $w={b.w!}>{b.label}</BmLabel>}
          </Bookmark>
        ))}
        <BmRight>
          <Chevrons>»</Chevrons>
          <OtherMarks><Folder size={17} fill="#c8c8c8" /><span>Otros marcadores</span></OtherMarks>
        </BmRight>
      </Bookmarks>

      <Browser>
        <Viewport>
          <Frame>
            <FrameBody>
              <Sidebar>
                {menu.map(([label, icon]) => (
                  <MenuRow key={label}><MenuGlyph>{icon}</MenuGlyph><span>{label}</span></MenuRow>
                ))}
              </Sidebar>
              <Panel>
                <Table>
                  <HeadCell><Check type="checkbox" /></HeadCell>
                  <HeadCell>Nombre del cliente (Dirección MAC)</HeadCell>
                  <HeadCell>Categoría de contenido</HeadCell>
                  <HeadCell>Agregar o<br />eliminar</HeadCell>

                  <BodyCell><Check type="checkbox" defaultChecked /></BodyCell>
                  <ClientCell>
                    <Combo>
                      <ComboInput>82:83:9D:83:28:EE</ComboInput>
                      <ComboArrow><i /></ComboArrow>
                      <ClientList>
                        {clients.map((c, i) => (
                          <ClientItem key={i} $active={c === "Nil"}>{c}</ClientItem>
                        ))}
                        <OfflineLink>Show Offline Client List</OfflineLink>
                        <Tooltip>82:83:9D:83:28:EE</Tooltip>
                      </ClientList>
                    </Combo>
                  </ClientCell>
                  <CatCell>
                    {categories.map(([title, lines]) => (
                      <Category key={title}>
                        <Expander><ExpanderIcon /></Expander>
                        <CatHead><Check type="checkbox" /><span>{title}</span></CatHead>
                        {lines.map((l) => <CatText key={l}>{l}</CatText>)}
                      </Category>
                    ))}
                  </CatCell>
                  <AddCell><AddIcon /></AddCell>

                  <Rule />
                  <EmptyRow>No hay datos en la tabla.</EmptyRow>
                </Table>
                <ActionRow>
                  <Apply>Aplicar</Apply>
                  <Powered>
                    <PoweredBy>Powered by</PoweredBy>
                    <TrendRow>
                      <TrendLogo />
                      <TrendText><TrendTop>TREND</TrendTop><TrendBottom>MICRO</TrendBottom></TrendText>
                    </TrendRow>
                  </Powered>
                </ActionRow>
              </Panel>
            </FrameBody>
            <Footer>
              <HelpBadge>?</HelpBadge>
              <HelpLabel>Ayuda<br />técnica</HelpLabel>
              <FooterLinks><a>Registro del producto</a> | <a>Comentario</a></FooterLinks>
              <Faq>FAQ</Faq>
              <FaqInput />
              <FaqSearch><Search size={17} strokeWidth={3} /></FaqSearch>
            </Footer>
          </Frame>
          <Copyright>2022 ASUSTeK Computer Inc. Reservados todos los derechos.</Copyright>
        </Viewport>
        <Scrollbar><ScrollUp /><ScrollThumb /></Scrollbar>
      </Browser>
    </Screen>
  );
}
